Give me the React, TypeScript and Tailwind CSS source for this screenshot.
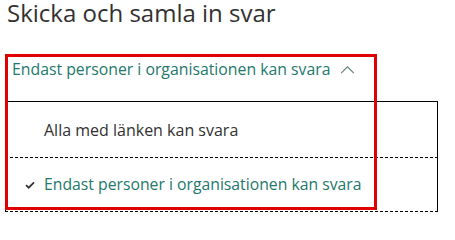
import React from "react";

function Check() {
  return (
    <svg viewBox="0 0 10 8" className="w-[10px] h-[8px]" fill="none">
      <path d="M1 4.2 L3.7 6.7 L9 1.3" stroke="#323130" strokeWidth="1.7" />
    </svg>
  );
}

function ChevronUp() {
  return (
    <svg viewBox="0 0 16 10" className="w-[15px] h-[9px]" fill="none">
      <path d="M1 9 L8 2 L15 9" stroke="#5f7f79" strokeWidth="1.2" />
    </svg>
  );
}

export default function App() {
  return (
    <div className="relative w-[455px] h-[214px] overflow-hidden bg-white font-['Open_Sans',sans-serif]">
      {/* Title */}
      <h1 className="pl-[7px] text-[24px] leading-[26px] text-[#323130]">
        Skicka och samla in svar
      </h1>

      {/* Select trigger */}
      <button className="mt-[32px] ml-[12px] flex items-center gap-[10px] text-[15.8px] leading-[22px] text-[#23786b]">
        <span>Endast personer i organisationen kan svara</span>
        <ChevronUp />
      </button>

      {/* Options menu */}
      <div className="mt-[21px] ml-[5px] w-[433px] border-t border-r border-black">
        <div className="h-[55px] pl-[39px] flex items-center text-[16px] text-[#323130]">
          Alla med länken kan svara
        </div>
        <div className="-mr-px h-[55px] border border-dashed border-black flex items-center pl-[19px] gap-[9px] text-[15.75px] text-[#23786b]">
          <Check />
          <span>Endast personer i organisationen kan svara</span>
        </div>
      </div>

      {/* Highlight annotation */}
      <div className="absolute left-[5px] top-[54px] w-[372px] h-[156px] border-[3px] border-[#e00000] pointer-events-none" />
    </div>
  );
}
